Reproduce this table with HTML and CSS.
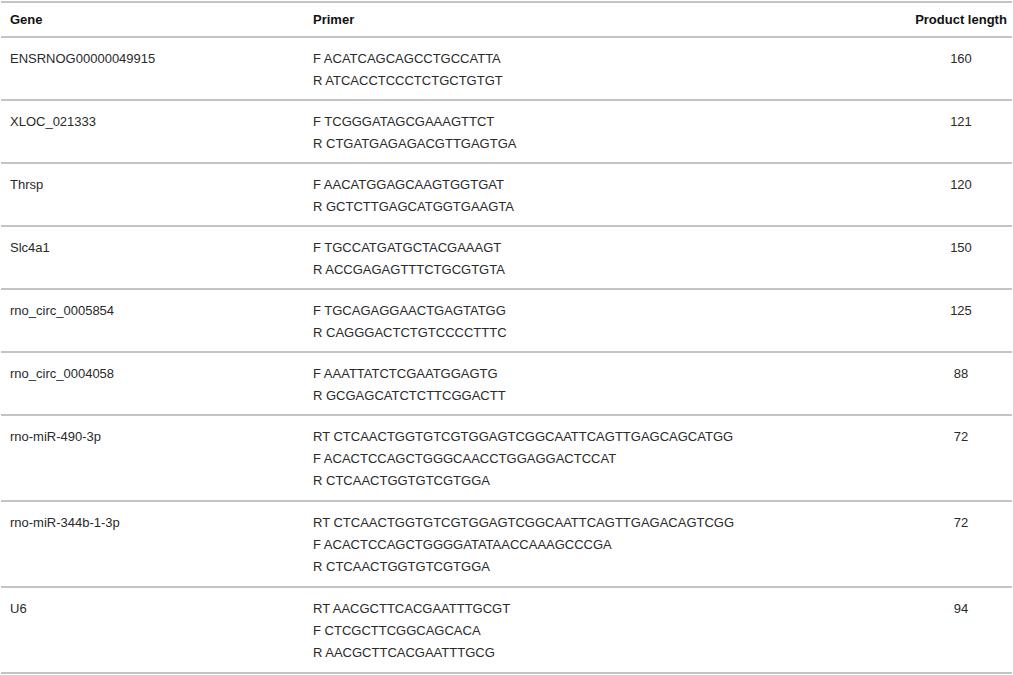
FILE: index.html
```html
<!DOCTYPE html>
<html>
<head>
<meta charset="utf-8">
<link rel="stylesheet" href="styles.css">
</head>
<body>
<table class="primers">
  <colgroup>
    <col class="c-gene">
    <col class="c-primer">
    <col class="c-len">
  </colgroup>
  <thead>
    <tr><th class="gene">Gene</th><th class="primer">Primer</th><th class="len">Product length</th></tr>
  </thead>
  <tbody>
    <tr><td class="gene">ENSRNOG00000049915</td><td class="primer"><div>F ACATCAGCAGCCTGCCATTA</div><div>R ATCACCTCCCTCTGCTGTGT</div></td><td class="len">160</td></tr>
    <tr><td class="gene">XLOC_021333</td><td class="primer"><div>F TCGGGATAGCGAAAGTTCT</div><div>R CTGATGAGAGACGTTGAGTGA</div></td><td class="len">121</td></tr>
    <tr><td class="gene">Thrsp</td><td class="primer"><div>F AACATGGAGCAAGTGGTGAT</div><div>R GCTCTTGAGCATGGTGAAGTA</div></td><td class="len">120</td></tr>
    <tr><td class="gene">Slc4a1</td><td class="primer"><div>F TGCCATGATGCTACGAAAGT</div><div>R ACCGAGAGTTTCTGCGTGTA</div></td><td class="len">150</td></tr>
    <tr><td class="gene">rno_circ_0005854</td><td class="primer"><div>F TGCAGAGGAACTGAGTATGG</div><div>R CAGGGACTCTGTCCCCTTTC</div></td><td class="len">125</td></tr>
    <tr><td class="gene">rno_circ_0004058</td><td class="primer"><div>F AAATTATCTCGAATGGAGTG</div><div>R GCGAGCATCTCTTCGGACTT</div></td><td class="len">88</td></tr>
    <tr class="tall"><td class="gene">rno-miR-490-3p</td><td class="primer"><div>RT CTCAACTGGTGTCGTGGAGTCGGCAATTCAGTTGAGCAGCATGG</div><div>F ACACTCCAGCTGGGCAACCTGGAGGACTCCAT</div><div>R CTCAACTGGTGTCGTGGA</div></td><td class="len">72</td></tr>
    <tr class="tall"><td class="gene">rno-miR-344b-1-3p</td><td class="primer"><div>RT CTCAACTGGTGTCGTGGAGTCGGCAATTCAGTTGAGACAGTCGG</div><div>F ACACTCCAGCTGGGGATATAACCAAAGCCCGA</div><div>R CTCAACTGGTGTCGTGGA</div></td><td class="len">72</td></tr>
    <tr class="tall"><td class="gene">U6</td><td class="primer"><div>RT AACGCTTCACGAATTTGCGT</div><div>F CTCGCTTCGGCAGCACA</div><div>R AACGCTTCACGAATTTGCG</div></td><td class="len">94</td></tr>
  </tbody>
</table>
</body>
</html>
```

FILE: styles.css
```css
html, body {
  margin: 0;
  padding: 0;
  background: #ffffff;
}
body {
  padding-top: 1px;
}
.primers {
  width: 1011px;
  margin-left: 1px;
  border-collapse: collapse;
  table-layout: fixed;
  font-family: "Liberation Sans", Arial, sans-serif;
  font-size: 13px;
  line-height: 22px;
  color: #2a2a2a;
}
.c-gene { width: 303px; }
.c-primer { width: 606px; }
.c-len { width: 102px; }
.primers th,
.primers td {
  border-top: 2px solid #c4c4c4;
  border-bottom: 2px solid #c4c4c4;
  vertical-align: top;
  text-align: left;
}
.primers th {
  font-weight: bold;
  color: #111;
  padding: 6px 0 5px 0;
}
.primers td {
  padding: 10px 0 7px 0;
}
.primers .tall td {
  padding-bottom: 8px;
}
.primers .gene { padding-left: 9px; }
.primers .primer { padding-left: 9px; }
.primers .len { text-align: center; }
```
